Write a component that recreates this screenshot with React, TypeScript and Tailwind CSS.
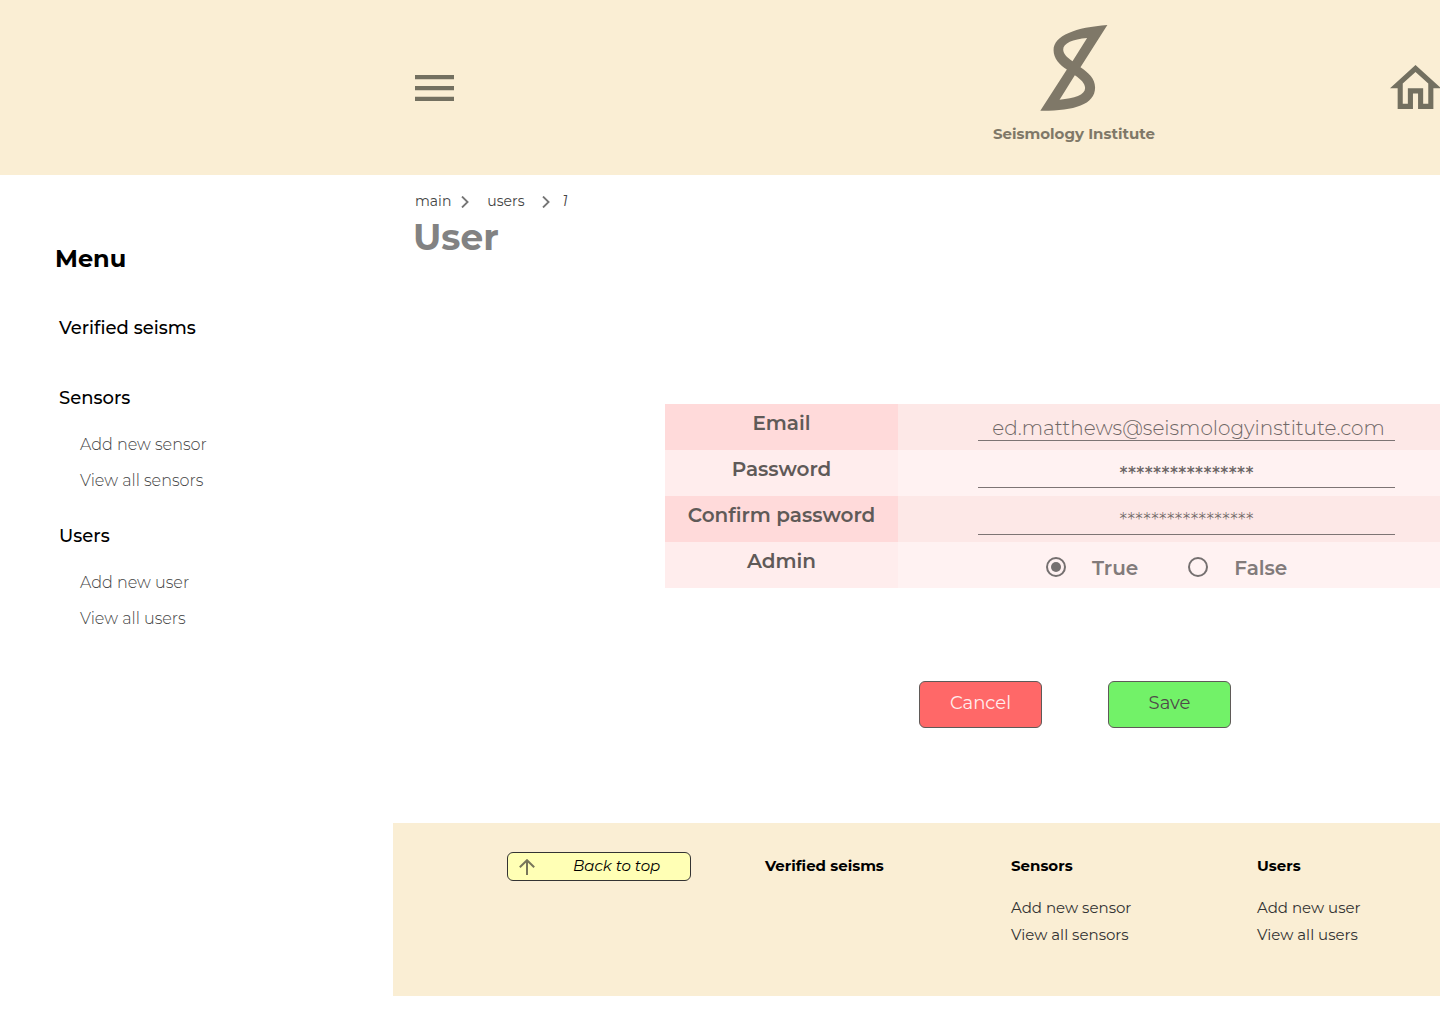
import { useState } from "react";

const groups = [
  { title: "Verified seisms", links: [] as string[] },
  { title: "Sensors", links: ["Add new sensor", "View all sensors"] },
  { title: "Users", links: ["Add new user", "View all users"] },
];

function Logo() {
  return (
    <svg viewBox="182 44 203 259" className="h-[86px] w-[68px]" fill="#7f7868" fillRule="evenodd" aria-hidden="true">
      <path d="M384 44C290 51 222 75 222 120C222 145 240 164 262 178L182 302C280 303 347 285 347 232C347 205 327 187 303 171ZM323 83L279 153C262 142 251 130 251 118C251 98 280 87 323 83ZM286 195L240 269C285 265 317 255 317 234C317 220 305 208 286 195Z" />
    </svg>
  );
}

function Header() {
  return (
    <header className="flex h-[175px] items-center bg-[#faeed4] pl-[415px]">
      <button type="button" aria-label="Toggle menu" className="shrink-0">
        <svg viewBox="0 0 39 26" className="h-[26px] w-[39px]" fill="#737060" aria-hidden="true">
          <path d="M0 0h39v4.3H0zM0 10.9h39v4.3H0zM0 21.7h39V26H0z" />
        </svg>
      </button>
      <a href="#home" className="mr-[237px] ml-auto flex w-[158px] flex-col items-center pb-1 text-[#7f7868]">
        <Logo />
        <span className="mt-[11px] mb-px text-[15px] leading-6 font-bold whitespace-nowrap">Seismology Institute</span>
      </a>
      <a href="#home" aria-label="Home" className="shrink-0 pb-[2px]">
        <svg viewBox="2 3 19.6 17" className="h-[44px] w-[50px]" fill="#737060" preserveAspectRatio="none" aria-hidden="true">
          <path d="M12 5.69l5 4.5V18h-2v-6H9v6H7v-7.81l5-4.5M12 3L2 12h3v8h6v-6h2v6h6v-8h3L12 3z" />
        </svg>
      </a>
    </header>
  );
}

function Sidebar() {
  return (
    <aside className="w-[393px] shrink-0 pt-[68px] pl-[55px] text-black">
      <h2 className="text-2xl leading-8 font-bold">Menu</h2>
      <nav aria-label="Menu" className="mt-[39px] pl-1">
        <a href="#verified" className="mb-[42px] block text-lg leading-7 font-medium">Verified seisms</a>
        {groups.slice(1).map((g) => (
          <div key={g.title} className="mb-[29px]">
            <h3 className="text-lg leading-7 font-medium">{g.title}</h3>
            <ul className="mt-[21px] flex flex-col gap-3 pl-[21px] text-base font-light text-[#444]">
              {g.links.map((l) => (
                <li key={l}><a href="#link">{l}</a></li>
              ))}
            </ul>
          </div>
        ))}
      </nav>
    </aside>
  );
}

function Chevron() {
  return (
    <svg viewBox="0 0 8 12" className="mt-[2px] h-3 w-2" fill="none" stroke="#757575" strokeWidth="1.8" aria-hidden="true">
      <path d="M1 .5L6.6 6L1 11.5" />
    </svg>
  );
}

const labelCell = "h-[46px] w-[233px] pt-1 text-center align-top text-xl leading-[31px] font-semibold text-[#5f5a58]";
const field =
  "block h-[29px] w-[417px] border-b border-[#7d7474] bg-transparent text-center text-xl outline-none";

function UserForm() {
  const [email, setEmail] = useState("ed.matthews@seismologyinstitute.com");
  const [password, setPassword] = useState("****************");
  const [confirm, setConfirm] = useState("*****************");
  const [admin, setAdmin] = useState(true);
  return (
    <form className="mt-[147px]" onSubmit={(e) => e.preventDefault()}>
      <div className="pl-[272px]">
        <table className="w-full border-collapse">
          <tbody>
            <tr className="bg-[#fde8e7]">
              <th scope="row" className={labelCell + " bg-[#ffdada]"}><label htmlFor="email">Email</label></th>
              <td className="pt-2 pl-20 align-top">
                <input id="email" className={field + " pt-1 pl-1 font-light text-[#6f6766]"} value={email} onChange={(e) => setEmail(e.target.value)} />
              </td>
            </tr>
            <tr className="bg-[#fff2f2]">
              <th scope="row" className={labelCell + " bg-[#ffeded]"}><label htmlFor="password">Password</label></th>
              <td className="pt-[9px] pl-20 align-top">
                <input id="password" autoComplete="off" className={field + " pt-[2px] font-medium text-[#6a6464]"} value={password} onChange={(e) => setPassword(e.target.value)} />
              </td>
            </tr>
            <tr className="bg-[#fde8e7]">
              <th scope="row" className={labelCell + " bg-[#ffdada]"}><label htmlFor="confirm">Confirm password</label></th>
              <td className="pt-[10px] pl-20 align-top">
                <input id="confirm" autoComplete="off" className={field + " font-light text-[#6f6766]"} value={confirm} onChange={(e) => setConfirm(e.target.value)} />
              </td>
            </tr>
            <tr className="bg-[#fff2f2]">
              <th scope="row" className={labelCell + " bg-[#ffeded]"}>Admin</th>
              <td className="pt-2 pl-[148px] align-top">
                <div role="radiogroup" aria-label="Admin" className="flex gap-[50px] text-xl leading-8 font-semibold text-[#827b7b]">
                  {[true, false].map((v) => (
                    <label key={String(v)} className="flex items-center gap-[26px]">
                      <input
                        type="radio"
                        name="admin"
                        checked={admin === v}
                        onChange={() => setAdmin(v)}
                        className="size-5 appearance-none rounded-full border-2 border-[#757070] bg-clip-content p-[3px] checked:bg-[#757070]"
                      />
                      <span className="pt-[2px]">{v ? "True" : "False"}</span>
                    </label>
                  ))}
                </div>
              </td>
            </tr>
          </tbody>
        </table>
      </div>
      <div className="mt-[93px] flex gap-[66px] pl-[526px] text-lg">
        <button type="button" className="h-[47px] w-[123px] rounded-md border border-[#5f5a58] bg-[#ff6868] pb-[3px] text-[#ffeeee]">Cancel</button>
        <button type="submit" className="h-[47px] w-[123px] rounded-md border border-[#5f5a58] bg-[#72f268] pb-[3px] text-[#4f4a48]">Save</button>
      </div>
    </form>
  );
}

function Footer() {
  return (
    <footer className="mt-[95px] flex bg-[#faeed4] pt-[29px] pb-[51px] pl-[114px]">
      <a href="#top" className="mr-[74px] flex h-[29px] w-[184px] shrink-0 items-center rounded-md border border-[#333] bg-[#ffffb5] pl-[11px] text-black">
        <svg viewBox="0 0 16 16" className="size-4" fill="none" stroke="#77755a" strokeWidth="2" aria-hidden="true">
          <path d="M8 16V1.5M.8 8.2L8 1.2l7.2 7" />
        </svg>
        <span className="ml-[38px] text-[15px] italic">Back to top</span>
      </a>
      {groups.map((g) => (
        <div key={g.title} className="w-[246px] shrink-0 pt-1 text-[15px] leading-5 last:w-auto last:shrink">
          <h3 className="font-bold text-black">{g.title}</h3>
          <ul className="mt-[22px] flex h-[47px] flex-col gap-[7px] text-[#333]">
            {g.links.map((l) => (
              <li key={l}><a href="#link">{l}</a></li>
            ))}
          </ul>
        </div>
      ))}
    </footer>
  );
}

export default function App() {
  return (
    <div id="top" className="min-h-screen overflow-x-hidden bg-white font-['Montserrat','Inter',sans-serif] [font-variant-ligatures:none]">
      <Header />
      <div className="flex">
        <Sidebar />
        <main className="min-w-0 flex-1 pt-[13px]">
          <nav aria-label="Breadcrumb" className="flex items-center pl-[22px] text-sm leading-6 text-[#444]">
            <a href="#main" className="mr-[10px]">main</a>
            <Chevron />
            <a href="#users" className="mr-[18px] ml-[18px]">users</a>
            <Chevron />
            <span className="ml-3 pt-px italic" aria-current="page">1</span>
          </nav>
          <h1 className="mt-1 pl-[20px] text-4xl leading-10 font-bold text-[#828282]">User</h1>
          <UserForm />
          <Footer />
        </main>
      </div>
    </div>
  );
}
